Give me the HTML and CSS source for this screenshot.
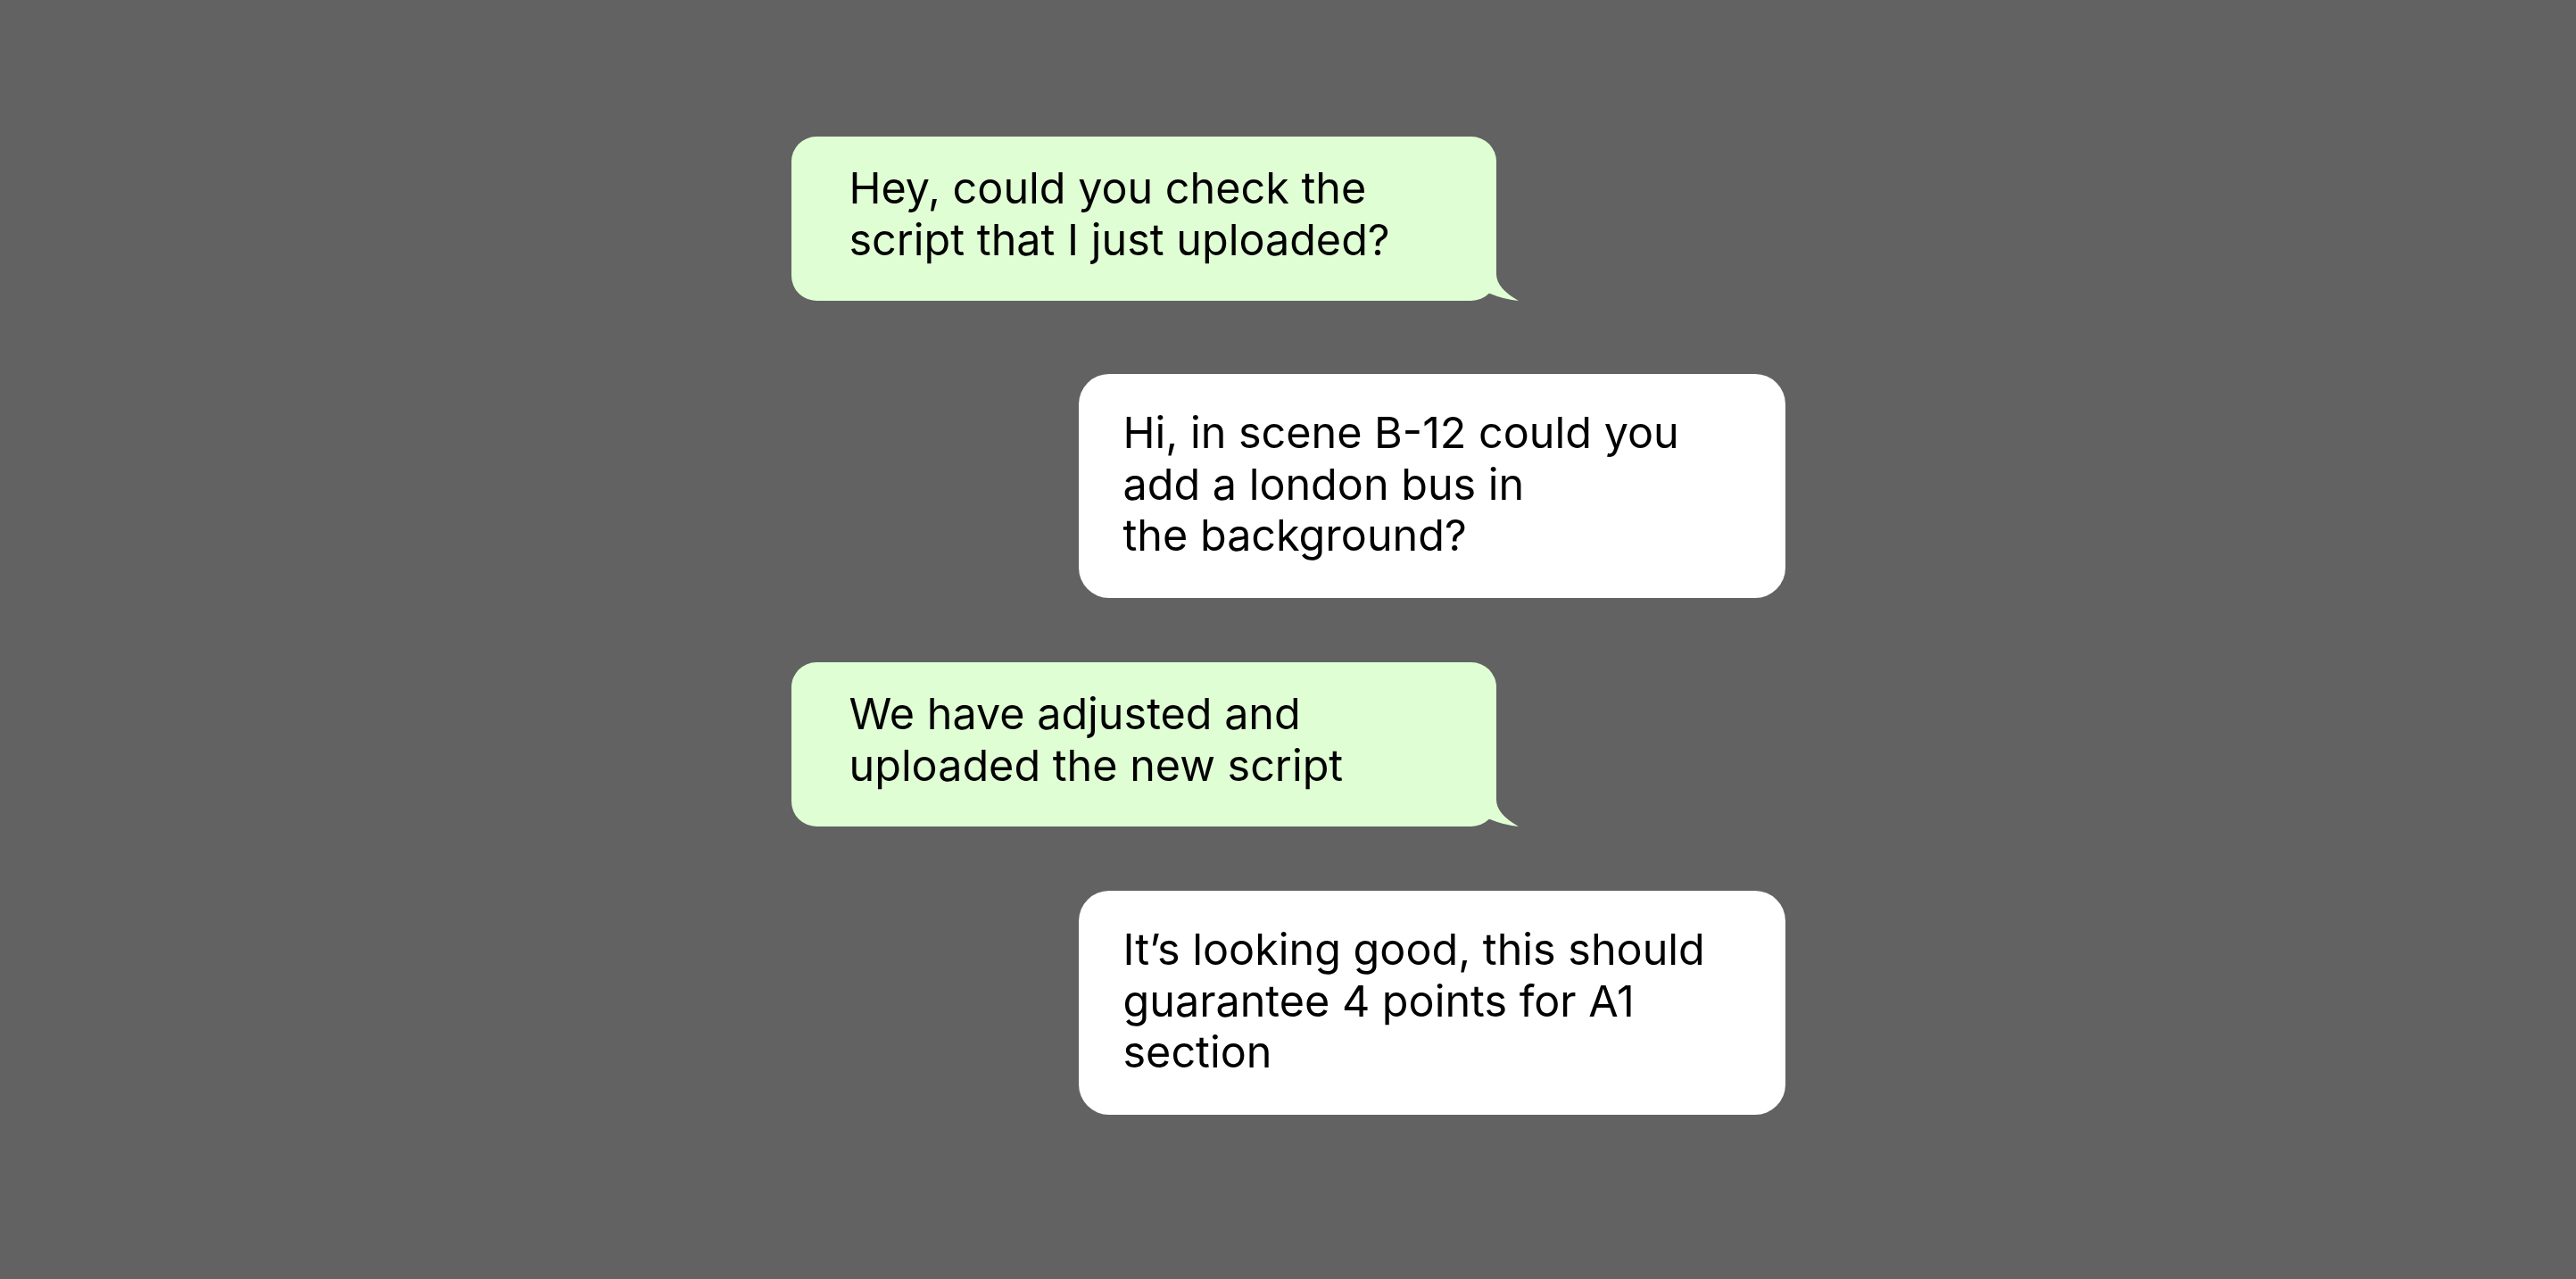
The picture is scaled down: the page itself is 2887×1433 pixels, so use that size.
FILE: index.html
```html
<!DOCTYPE html>
<html lang="en">
<head>
<meta charset="utf-8">
<title>Chat</title>
<link rel="stylesheet" href="styles.css">
</head>
<body>
<main class="chat">
  <div class="bubble sent b1">
    <p class="msg">Hey, could you check the<br>script that I just uploaded?</p>
    <svg class="tail" viewBox="-20 -40 50 42" width="50" height="42" aria-hidden="true"><path d="M -2 -34 L 0 -30 Q 0 -14 25 0 Q 10 -1 -8.3 -8.5 L -20 -34 Z"/></svg>
  </div>
  <div class="bubble recv b2">
    <p class="msg">Hi, in scene B-12 could you<br>add a london bus in<br>the background?</p>
  </div>
  <div class="bubble sent b3">
    <p class="msg">We have adjusted and<br>uploaded the new script</p>
    <svg class="tail" viewBox="-20 -40 50 42" width="50" height="42" aria-hidden="true"><path d="M -2 -34 L 0 -30 Q 0 -14 25 0 Q 10 -1 -8.3 -8.5 L -20 -34 Z"/></svg>
  </div>
  <div class="bubble recv b4">
    <p class="msg">It’s looking good, this should<br>guarantee 4 points for A1<br>section</p>
  </div>
</main>
</body>
</html>
```
FILE: styles.css
```css
html, body {
  margin: 0;
  padding: 0;
  background: #626262;
}
body {
  font-family: Inter, "Noto Sans", sans-serif;
  color: #000;
}
.chat {
  width: 1114px;
  margin: 0 auto;
  padding-top: 153px;
  display: flex;
  flex-direction: column;
  box-sizing: border-box;
}
.bubble {
  position: relative;
  box-sizing: border-box;
}
.msg {
  margin: 0;
  white-space: nowrap;
  font-size: 48.5px;
  line-height: 57.5px;
}
.sent {
  align-self: flex-start;
  width: 790px;
  background: #e0fed4;
  border-radius: 28px;
  height: 184px;
  padding: 29px 0 0 65px;
}
.recv {
  align-self: flex-end;
  width: 792px;
  background: #ffffff;
  border-radius: 34px;
  height: 251px;
  padding: 37px 0 0 50px;
}
.tail {
  position: absolute;
  right: -30px;
  bottom: -2px;
  fill: #e0fed4;
  overflow: visible;
}
.b2 { margin-top: 82px; }
.b3 { margin-top: 72px; }
.b4 { margin-top: 72px; }
```
